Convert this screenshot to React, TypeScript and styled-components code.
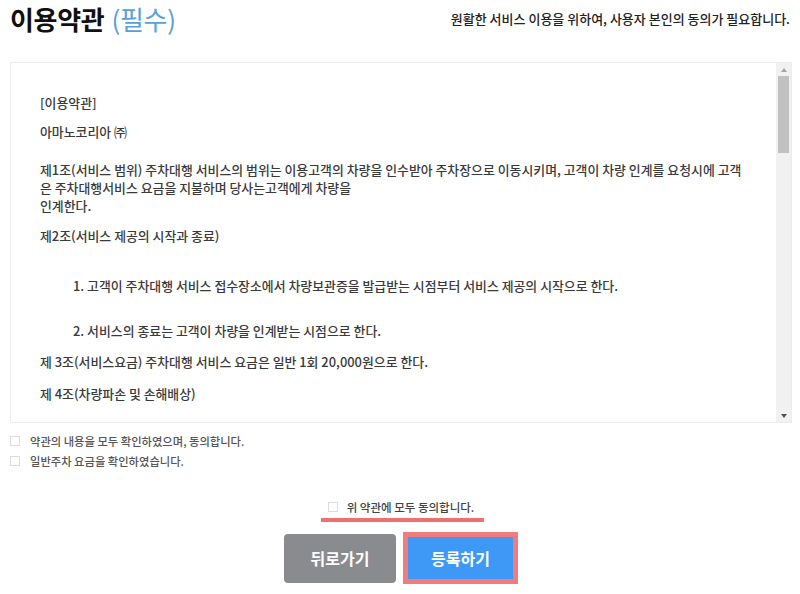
import * as React from "react"
import styled, { createGlobalStyle } from "styled-components"

const GlobalStyle = createGlobalStyle`
  html, body {
    margin: 0;
    padding: 0;
    background: #fff;
  }
  body {
    font-family: "Noto Sans CJK KR", "Noto Sans", sans-serif;
    color: #333;
  }
`

interface SpaceProps {
  readonly $space?: number
}
interface ArrowProps {
  readonly $down?: boolean
}

const Page = styled.div`
  box-sizing: border-box;
  width: 800px;
  height: 594px;
  padding: 0 8px 0 10px;
  overflow: hidden;
`
const Header = styled.div`
  align-items: center;
  display: flex;
  height: 36px;
  justify-content: space-between;
`
const Title = styled.h2`
  color: #111;
  font-size: 26px;
  font-weight: 700;
  letter-spacing: -0.3px;
  margin: 0;
`
const Required = styled.span`
  color: #5a9fd6;
  font-weight: 400;
  margin-left: 7px;
`
const Notice = styled.p`
  color: #222;
  font-size: 13px;
  font-weight: 500;
  margin: 0 2px 0 0;
`
const TermsBox = styled.div`
  border: 1px solid #ececec;
  box-sizing: border-box;
  display: flex;
  height: 361px;
  margin-top: 26px;
`
const TermsBody = styled.div`
  color: #3a3a3a;
  flex: 1;
  font-size: 12.9px;
  font-weight: 500;
  line-height: 18px;
  overflow: hidden;
  padding: 31px 20px 0 29px;
`
const Scrollbar = styled.div`
  background: #f1f1f1;
  display: flex;
  flex-direction: column;
  width: 15px;
`
const Arrow = styled.div<ArrowProps>`
  align-items: center;
  display: flex;
  height: 13px;
  justify-content: center;
  &::before {
    border-left: 3.5px solid transparent;
    border-right: 3.5px solid transparent;
    ${(props): string =>
      props.$down ? "border-top: 4px solid #505050;" : "border-bottom: 4px solid #a3a3a3;"}
    content: "";
  }
`
const Track = styled.div`
  flex: 1;
  padding: 0 2px;
`
const Thumb = styled.div`
  background: #c1c1c1;
  height: 77px;
`
const Para = styled.p<SpaceProps>`
  margin: ${(props): number => props.$space ?? 0}px 0 0;
  white-space: nowrap;
`
const ListItem = styled.p<SpaceProps>`
  margin: ${(props): number => props.$space ?? 0}px 0 0 33px;
  white-space: nowrap;
`
const CheckList = styled.div`
  margin-top: 8px;
`
const CheckRow = styled.label`
  align-items: center;
  color: #555;
  display: flex;
  font-size: 11.3px;
  font-weight: 500;
  gap: 10px;
  height: 20px;
`
const Box = styled.input.attrs({ type: "checkbox" })`
  appearance: none;
  background: #fff;
  border: 1px solid #ddd;
  box-sizing: border-box;
  flex: none;
  height: 10px;
  margin: 0;
  width: 10px;
`
const AgreeRow = styled.div`
  display: flex;
  justify-content: center;
  margin-top: 26px;
`
const AgreeLabel = styled(CheckRow)`
  color: #444;
  font-size: 11.5px;
  gap: 9px;
  position: relative;
  &::after {
    background: #f07070;
    bottom: -5px;
    content: "";
    height: 4px;
    left: -7px;
    position: absolute;
    right: -10px;
  }
`
const Buttons = styled.div`
  align-items: center;
  display: flex;
  gap: 7px;
  justify-content: center;
  margin-top: 15px;
`
const BackButton = styled.button`
  background: #8a8b8f;
  border: none;
  border-radius: 4px;
  color: #fff;
  font-family: inherit;
  font-size: 16px;
  font-weight: 700;
  height: 49px;
  width: 112px;
`
const SubmitButton = styled.button`
  background: #3d99f5;
  border: 5px solid #f27b7b;
  box-sizing: border-box;
  color: #fff;
  font-family: inherit;
  font-size: 16px;
  font-weight: 700;
  height: 52px;
  width: 115px;
`

const App: React.FC = () => (
  <Page>
    <GlobalStyle />
    <Header>
      <Title>
        이용약관<Required>(필수)</Required>
      </Title>
      <Notice>원활한 서비스 이용을 위하여, 사용자 본인의 동의가 필요합니다.</Notice>
    </Header>
    <TermsBox>
      <TermsBody>
        <Para>[이용약관]</Para>
        <Para $space={11}>아마노코리아 ㈜</Para>
        <Para $space={20}>
          제1조(서비스 범위) 주차대행 서비스의 범위는 이용고객의 차량을 인수받아 주차장으로 이동시키며, 고객이 차량 인계를 요청시에 고객
          <br />은 주차대행서비스 요금을 지불하며 당사는고객에게 차량을
          <br />인계한다.
        </Para>
        <Para $space={12}>제2조(서비스 제공의 시작과 종료)</Para>
        <ListItem $space={32}>1. 고객이 주차대행 서비스 접수장소에서 차량보관증을 발급받는 시점부터 서비스 제공의 시작으로 한다.</ListItem>
        <ListItem $space={27}>2. 서비스의 종료는 고객이 차량을 인계받는 시점으로 한다.</ListItem>
        <Para $space={13}>제 3조(서비스요금) 주차대행 서비스 요금은 일반 1회 20,000원으로 한다.</Para>
        <Para $space={14}>제 4조(차량파손 및 손해배상)</Para>
      </TermsBody>
      <Scrollbar>
        <Arrow />
        <Track>
          <Thumb />
        </Track>
        <Arrow $down />
      </Scrollbar>
    </TermsBox>
    <CheckList>
      <CheckRow>
        <Box />
        약관의 내용을 모두 확인하였으며, 동의합니다.
      </CheckRow>
      <CheckRow>
        <Box />
        일반주차 요금을 확인하였습니다.
      </CheckRow>
    </CheckList>
    <AgreeRow>
      <AgreeLabel>
        <Box />위 약관에 모두 동의합니다.
      </AgreeLabel>
    </AgreeRow>
    <Buttons>
      <BackButton>뒤로가기</BackButton>
      <SubmitButton>등록하기</SubmitButton>
    </Buttons>
  </Page>
)

export default App
